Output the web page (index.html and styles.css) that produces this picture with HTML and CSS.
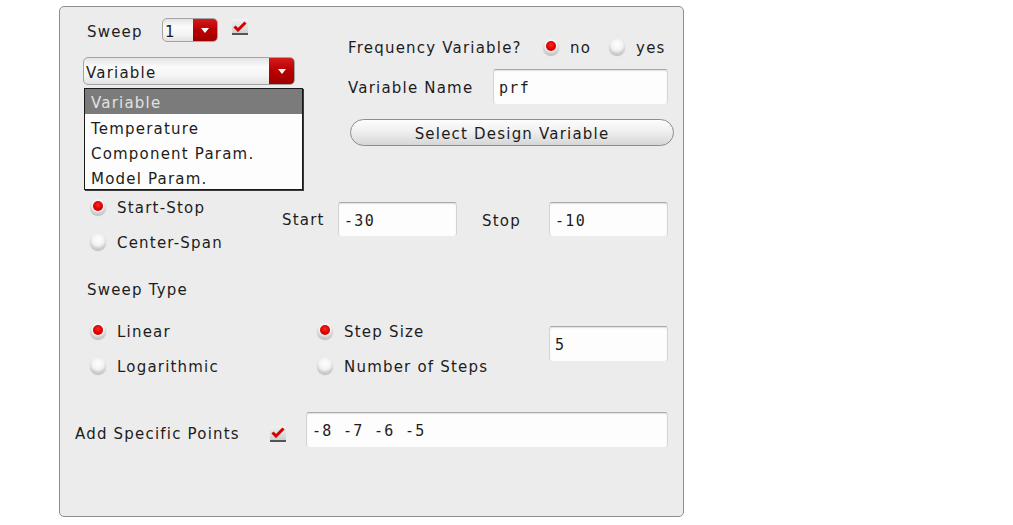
FILE: index.html
```html
<!DOCTYPE html>
<html>
<head>
<meta charset="utf-8">
<link rel="stylesheet" href="styles.css">
</head>
<body>
<div class="panel">
  <div class="top">
    <div class="top-left">
      <div class="sweep-row">
        <span class="sweep-label">Sweep</span>
        <div class="select sel-small"><span class="sel-text">1</span><span class="sel-btn"><i class="tri"></i></span></div>
        <span class="check check-sweep"><svg width="14" height="11" viewBox="0 0 14 11"><path d="M1.5 5.5 L5 9 L12.5 1.5" fill="none" stroke="#d40000" stroke-width="3"/></svg></span>
      </div>
      <div class="select sel-var"><span class="sel-text">Variable</span><span class="sel-btn"><i class="tri"></i></span></div>
    </div>
    <div class="top-right">
      <div class="freq-row">
        <span class="freq-label">Frequency Variable?</span>
        <span class="radio on"></span><span class="rlabel r-no">no</span>
        <span class="radio off r-yes"></span><span class="rlabel r-yes-l">yes</span>
      </div>
      <div class="name-row">
        <span class="name-label">Variable Name</span>
        <div class="field f-name">prf</div>
      </div>
      <div class="pill-btn">Select Design Variable</div>
    </div>
  </div>

  <div class="range">
    <div class="radio-col rc-mode">
      <div class="ritem"><span class="radio on"></span><span class="rlabel">Start-Stop</span></div>
      <div class="ritem"><span class="radio off"></span><span class="rlabel">Center-Span</span></div>
    </div>
    <div class="ss-row">
      <span class="ss-label l-start">Start</span>
      <div class="field f-num">-30</div>
      <span class="ss-label l-stop">Stop</span>
      <div class="field f-num">-10</div>
    </div>
  </div>

  <div class="type-title">Sweep Type</div>

  <div class="types">
    <div class="radio-col rc-lin">
      <div class="ritem"><span class="radio on"></span><span class="rlabel">Linear</span></div>
      <div class="ritem"><span class="radio off"></span><span class="rlabel">Logarithmic</span></div>
    </div>
    <div class="radio-col rc-step">
      <div class="ritem"><span class="radio on"></span><span class="rlabel">Step Size</span></div>
      <div class="ritem"><span class="radio off"></span><span class="rlabel">Number of Steps</span></div>
    </div>
    <div class="field f-num f-step">5</div>
  </div>

  <div class="points">
    <span class="points-label">Add Specific Points</span>
    <span class="check check-points"><svg width="14" height="11" viewBox="0 0 14 11"><path d="M1.5 5.5 L5 9 L12.5 1.5" fill="none" stroke="#d40000" stroke-width="3"/></svg></span>
    <div class="field f-points">-8 -7 -6 -5</div>
  </div>

  <div class="popup">
    <div class="pitem sel">Variable</div>
    <div class="pitem">Temperature</div>
    <div class="pitem">Component Param.</div>
    <div class="pitem">Model Param.</div>
  </div>
</div>
</body>
</html>
```

FILE: styles.css
```css
* { box-sizing: border-box; }
body {
  margin: 0;
  background: #fff;
  font-family: "DejaVu Sans", "Liberation Sans", sans-serif;
  font-size: 15px;
  letter-spacing: 1.2px;
  color: #1c1c1c;
}
.panel {
  position: relative;
  margin: 6px 0 0 59px;
  width: 625px;
  height: 511px;
  border: 1px solid #8e8e8e;
  border-radius: 5px;
  background: #ececec;
}

/* top block */
.top { display: flex; height: 185px; }
.top-left { margin-left: 23px; width: 212px; padding-top: 11px; }
.sweep-row { display: flex; align-items: center; height: 24px; }
.sweep-label { width: 79px; padding-left: 4px; padding-top: 3px; }

.select {
  display: flex;
  border: 1px solid #a4a4a4;
  border-radius: 5px;
  overflow: hidden;
  background: linear-gradient(#e4e4e4, #fbfbfb 35%, #f4f4f4 70%, #e2e2e2);
}
.sel-text { flex: 1; display: flex; align-items: center; padding-left: 2px; padding-top: 3px; }
.sel-btn {
  width: 25px;
  display: flex; align-items: center; justify-content: center;
  background: linear-gradient(#d41a1a, #b80000 50%, #a00000);
}
.tri {
  width: 0; height: 0;
  border-left: 4px solid transparent;
  border-right: 4px solid transparent;
  border-top: 5px solid #fff;
}
.sel-small { width: 56px; height: 24px; }
.sel-small .sel-btn { width: 24px; }
.sel-var { margin-top: 15px; width: 212px; height: 28px; }

.check {
  width: 16px; height: 16px;
  display: inline-flex; align-items: center; justify-content: center;
  background: linear-gradient(#f2f2f2, #cfcfcf);
  border-bottom: 2px solid #555;
  flex: none;
}
.check-sweep { margin-left: 14px; margin-top: -6px; }

.top-right { margin-left: 53px; width: 326px; padding-top: 30px; }
.freq-row { display: flex; align-items: center; height: 20px; }
.freq-label { width: 195px; padding-top: 2px; }
.r-no { margin-left: 11px; }
.r-yes { margin-left: 18px; }
.r-yes-l { margin-left: 9px; }

.name-row { display: flex; align-items: center; height: 35px; margin-top: 12px; }
.name-label { width: 145px; padding-top: 2px; }

.field {
  display: flex; align-items: center;
  background: #fdfdfd;
  border-top: 1px solid #a9a9a9;
  border-left: 1px solid #d4d4d4;
  border-right: 1px solid #d4d4d4;
  border-radius: 3px;
  box-shadow: inset 0 1px 1px #e2e2e2;
  font-family: "DejaVu Sans Mono", "Liberation Mono", monospace;
  font-size: 15px;
  letter-spacing: 1.3px;
  padding-left: 5px;
  padding-top: 2px;
  height: 35px;
}
.f-name { width: 175px; }

.pill-btn {
  margin-top: 15px;
  margin-left: 2px;
  width: 324px; height: 27px;
  border: 1px solid #8c8c8c;
  border-radius: 14px;
  background: linear-gradient(#fdfdfd, #f0f0f0 45%, #d6d6d6);
  display: flex; align-items: center; justify-content: center;
  padding-top: 2px;
}

/* radios */
.radio {
  width: 16px; height: 16px;
  border-radius: 50%;
  flex: none;
  display: inline-block;
  position: relative;
  background: radial-gradient(circle at 50% 35%, #ffffff 0, #f2f2f2 45%, #c4c4c4 75%, #a8a8a8 100%);
  box-shadow: 0 1px 1px #bdbdbd;
}
.radio.on::after {
  content: "";
  position: absolute;
  left: 3px; top: 2px;
  width: 10px; height: 10px;
  border-radius: 50%;
  background: radial-gradient(circle at 50% 40%, #ff2a2a 0, #e00000 50%, #a80000 100%);
}
.rlabel { margin-left: 11px; padding-top: 2px; }
.ritem { display: flex; align-items: center; height: 20px; }
.ritem + .ritem { margin-top: 15px; }

/* range block */
.range { display: flex; height: 70px; }
.rc-mode { margin-left: 30px; width: 192px; padding-top: 5px; }
.ss-row { display: flex; align-items: center; margin-top: 10px; height: 34px; }
.ss-label { padding-top: 2px; }
.l-start { width: 56px; }
.l-stop { width: 67px; margin-left: 25px; padding-top: 4px; }
.f-num { width: 119px; height: 34px; }

.type-title { margin-top: 17px; height: 20px; padding-left: 27px; padding-top: 2px; display: flex; align-items: center; }

.types { display: flex; align-items: flex-start; margin-top: 22px; height: 55px; }
.rc-lin { margin-left: 30px; width: 227px; }
.rc-step { width: 232px; }
.f-step { margin-top: 5px; height: 35px; }

.points { display: flex; align-items: center; margin-top: 36px; height: 35px; padding-left: 15px; }
.points-label { width: 195px; margin-top: 9px; }
.check-points { margin-top: 8px; }
.f-points { margin-left: 20px; width: 362px; }

/* popup list */
.popup {
  position: absolute;
  left: 24px; top: 81px;
  width: 219px;
  border: 1px solid #1a1a1a;
  box-shadow: 1px 1px 0 #3a3a3a;
  background: #fdfdfd;
}
.pitem { height: 25px; padding-left: 6px; padding-top: 5px; display: flex; align-items: center; }
.pitem.sel { background: #7b7b7b; color: #e2e2e2; padding-top: 2px; }
```
